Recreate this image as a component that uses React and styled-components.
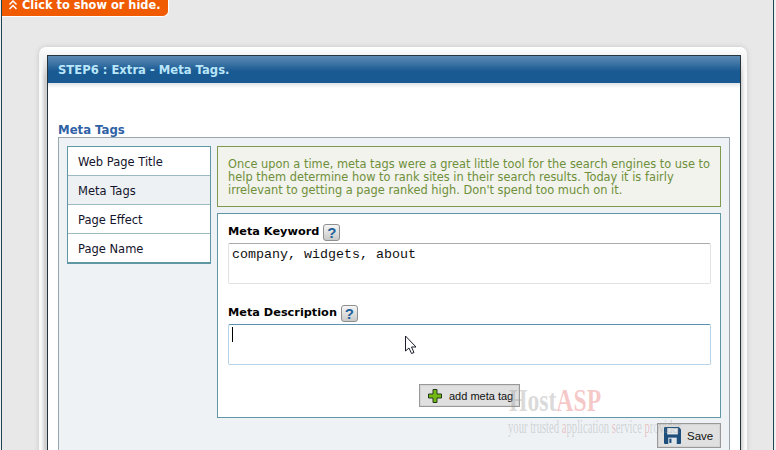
import styled, { createGlobalStyle } from 'styled-components';

const Global = createGlobalStyle`
  html, body { margin: 0; padding: 0; background: #f0f0f0; }
  #root { width: 776px; height: 450px; overflow: hidden; position: relative; }
`;

const Shell = styled.div`
  box-sizing: border-box;
  margin-left: 1px;
  width: 773px;
  height: 450px;
  overflow: hidden;
  background: #e8e8e8;
  border-left: 1px solid #1d4655;
  border-right: 1px solid #1d4655;
  font-family: 'DejaVu Sans', Verdana, sans-serif;
`;

const ToggleTab = styled.div`
  box-sizing: border-box;
  display: flex;
  align-items: flex-start;
  gap: 4px;
  width: 167px;
  height: 17px;
  padding-left: 6px;
  background: #f05a00;
  border-right: 1px solid #fff;
  border-bottom: 1px solid #fff;
  border-bottom-right-radius: 6px;
  color: #fff;
  font-size: 11.4px;
  font-weight: bold;
  line-height: 11px;
  overflow: hidden;
`;

const Card = styled.div`
  box-sizing: border-box;
  width: 708px;
  height: 420px;
  margin: 30px 0 0 37px;
  padding: 8px 6px 0 8px;
  background:
    linear-gradient(to bottom, #fff 0, #f6f6f6 8px, rgba(255, 255, 255, 0) 30px),
    linear-gradient(to right, #fafafa 0, #fafafa 2px, #d0d0d0 6px, #d0d0d0 calc(100% - 6px), #fafafa calc(100% - 2px), #fafafa 100%);
  border-top-left-radius: 7px;
  border-top-right-radius: 7px;
  box-shadow: 0 0 5px #c4c4c4;
`;

const Panel = styled.div`
  box-sizing: border-box;
  height: 420px;
  background: #fff;
  border: 1px solid #26343d;
  border-bottom: none;
`;

const PanelHeader = styled.div`
  height: 27px;
  padding-left: 10px;
  background: linear-gradient(to bottom, #5f8bb4 0, #3f76a6 7px, #1a5a92 15px, #1a5a92 100%);
  color: #b9e6fa;
  font-size: 11.6px;
  font-weight: bold;
  line-height: 28px;
`;

const PanelBody = styled.div`
  padding: 40px 10px 0;
  background: linear-gradient(to bottom, #dfe3e6 0, #fff 5px);
`;

const Heading = styled.div`
  color: #2f62a5;
  font-size: 11.7px;
  font-weight: bold;
  line-height: 14px;
`;

const TabBox = styled.div`
  box-sizing: border-box;
  display: flex;
  gap: 6px;
  width: 672px;
  height: 330px;
  padding: 8px;
  background: #eef2f5;
  border: 1px solid #98a6ae;
`;

const SideList = styled.ul`
  box-sizing: border-box;
  flex: none;
  align-self: flex-start;
  width: 144px;
  margin: 0;
  padding: 0;
  list-style: none;
  background: #fff;
  border: 1px solid #5f97a5;
  border-bottom-width: 2px;
`;

const SideItem = styled.li`
  height: 26px;
  padding: 2px 0 0 10px;
  background: ${(props) => (props.$active ? '#edf1f4' : '#fff')};
  border-bottom: ${(props) => (props.$last ? 'none' : '1px solid #9cb8c0')};
  color: #14142c;
  font-size: 11.5px;
  line-height: 26px;
`;

const MainCol = styled.div`
  flex: none;
  width: 504px;
`;

const Notice = styled.div`
  box-sizing: border-box;
  height: 61px;
  padding: 11px 10px 0;
  background: #f1f3ec;
  border: 1px solid #80994f;
  color: #6f8f3a;
  font-size: 11.4px;
  line-height: 13px;
  white-space: nowrap;
`;

const FormPanel = styled.div`
  box-sizing: border-box;
  height: 205px;
  margin-top: 6px;
  padding: 9px 10px 0;
  background: #fff;
  border: 1px solid #5f97a5;
`;

const FieldLabel = styled.div`
  display: flex;
  align-items: flex-start;
  gap: 4px;
  height: 20px;
  color: #000;
  font-size: 11.3px;
  font-weight: bold;
  line-height: 18px;
`;

const HelpIcon = styled.span`
  box-sizing: border-box;
  width: 17px;
  height: 17px;
  margin-top: 1px;
  background: linear-gradient(to bottom, #f6f6f6, #c8c8c8);
  border: 1px solid #8f8f8f;
  border-radius: 3px;
  color: #1f6199;
  font-family: 'Liberation Sans', Arial, sans-serif;
  font-size: 15px;
  font-weight: bold;
  line-height: 15px;
  text-align: center;
`;

const InputWrap = styled.div`
  position: relative;
  margin-bottom: ${(props) => props.$gap}px;
`;

const Field = styled.textarea`
  display: block;
  box-sizing: border-box;
  width: 483px;
  height: 41px;
  margin: 0;
  padding: 3px;
  background: #fff;
  border: 1px solid ${(props) => (props.$focused ? '#b5d4e8' : '#e2e2e2')};
  border-top-color: ${(props) => (props.$focused ? '#5a8fb0' : '#ababab')};
  border-radius: 2px;
  color: #111;
  font-family: 'Liberation Mono', 'Courier New', monospace;
  font-size: 13.33px;
  line-height: 15px;
  resize: none;
  outline: none;
  overflow: hidden;
`;

const Caret = styled.span`
  position: absolute;
  left: 4px;
  top: 3px;
  width: 1px;
  height: 15px;
  background: #000;
`;

const ActionButton = styled.div`
  box-sizing: border-box;
  display: flex;
  align-items: center;
  background: #e0e0e0;
  border: 1px solid #999;
  box-shadow: inset 0 0 0 1px #d4d4d4;
  color: #111;
  font-family: 'Liberation Sans', Arial, sans-serif;
`;

const AddButton = styled(ActionButton)`
  gap: 7px;
  width: 101px;
  height: 23px;
  margin-left: 191px;
  padding-left: 8px;
  font-size: 11px;
`;

const SaveRow = styled.div`
  display: flex;
  justify-content: flex-end;
  margin-top: 5px;
`;

const SaveButton = styled(ActionButton)`
  gap: 6px;
  width: 64px;
  height: 25px;
  padding-left: 6px;
  font-size: 11.5px;
`;

const Watermark = styled.div`
  position: absolute;
  left: 400px;
  top: 380px;
  width: 380px;
  pointer-events: none;
  font-family: 'Liberation Serif', 'Times New Roman', serif;
  color: rgba(150, 150, 150, 0.35);
`;

const MarkTitle = styled.div`
  position: absolute;
  left: 109px;
  top: 4px;
  font-size: 32px;
  font-weight: bold;
  line-height: 32px;
  transform: scaleX(0.74);
  transform-origin: left top;
  white-space: nowrap;
`;

const MarkLine = styled.div`
  position: absolute;
  left: 108px;
  top: 37px;
  font-size: 19px;
  line-height: 20px;
  transform: scaleX(0.56);
  transform-origin: left top;
  white-space: nowrap;
`;

const Red = styled.span`
  color: rgba(220, 60, 60, 0.28);
`;

const Pointer = styled.svg`
  position: absolute;
  left: 404px;
  top: 335px;
`;

function PlusIcon() {
  return (
    <svg width="14" height="14" viewBox="0 0 14 14">
      <path d="M5 .5h4v4.500h4.500v4H9v4.500H5V9H.5V5H5z" fill="#74b816" stroke="#26391a" />
    </svg>
  );
}

function FloppyIcon() {
  return (
    <svg width="17" height="17" viewBox="0 0 16 16">
      <path d="M0 1a1 1 0 0 1 1-1h13l2 2v13a1 1 0 0 1-1 1H1a1 1 0 0 1-1-1z" fill="#1d4e7c" />
      <rect x="3" y="1" width="10" height="6" fill="#e4e8ea" />
      <rect x="4" y="10" width="8" height="6" fill="#dfe4e8" />
      <rect x="5" y="11" width="2" height="4" fill="#1d4e7c" />
    </svg>
  );
}

export default function App() {
  return (
    <>
      <Global />
      <Shell>
        <ToggleTab>
          <svg width="10" height="10" viewBox="0 0 10 10" fill="none" stroke="#fff" strokeWidth="1.500">
            <path d="M1.500 4.500 5 1l3.500 3.500M1.500 9 5 5.500 8.500 9" />
          </svg>
          Click to show or hide.
        </ToggleTab>
        <Card>
          <Panel>
            <PanelHeader>STEP6 : Extra - Meta Tags.</PanelHeader>
            <PanelBody>
              <Heading>Meta Tags</Heading>
              <TabBox>
                <SideList>
                  <SideItem>Web Page Title</SideItem>
                  <SideItem $active>Meta Tags</SideItem>
                  <SideItem>Page Effect</SideItem>
                  <SideItem $last>Page Name</SideItem>
                </SideList>
                <MainCol>
                  <Notice>
                    Once upon a time, meta tags were a great little tool for the search engines to use to
                    <br />
                    help them determine how to rank sites in their search results. Today it is fairly
                    <br />
                    irrelevant to getting a page ranked high. Don't spend too much on it.
                  </Notice>
                  <FormPanel>
                    <FieldLabel>
                      Meta Keyword <HelpIcon>?</HelpIcon>
                    </FieldLabel>
                    <InputWrap $gap={20}>
                      <Field readOnly defaultValue="company, widgets, about" />
                    </InputWrap>
                    <FieldLabel>
                      Meta Description <HelpIcon>?</HelpIcon>
                    </FieldLabel>
                    <InputWrap $gap={19}>
                      <Field readOnly $focused defaultValue="" />
                      <Caret />
                    </InputWrap>
                    <AddButton>
                      <PlusIcon />
                      add meta tag
                    </AddButton>
                  </FormPanel>
                  <SaveRow>
                    <SaveButton>
                      <FloppyIcon />
                      Save
                    </SaveButton>
                  </SaveRow>
                </MainCol>
              </TabBox>
            </PanelBody>
          </Panel>
        </Card>
      </Shell>
      <Pointer width="14" height="20" viewBox="0 0 14 20">
        <path d="M1.500 1v15l3.500-3 2.500 5.500 2.500-1-2.500-5.500h4.500z" fill="#fff" stroke="#1c1c2a" />
      </Pointer>
      <Watermark>
        <MarkTitle>
          Host<Red>ASP</Red>
        </MarkTitle>
        <MarkLine>
          your trusted <Red>a</Red>pplication <Red>s</Red>ervice <Red>p</Red>rovider
        </MarkLine>
      </Watermark>
    </>
  );
}
